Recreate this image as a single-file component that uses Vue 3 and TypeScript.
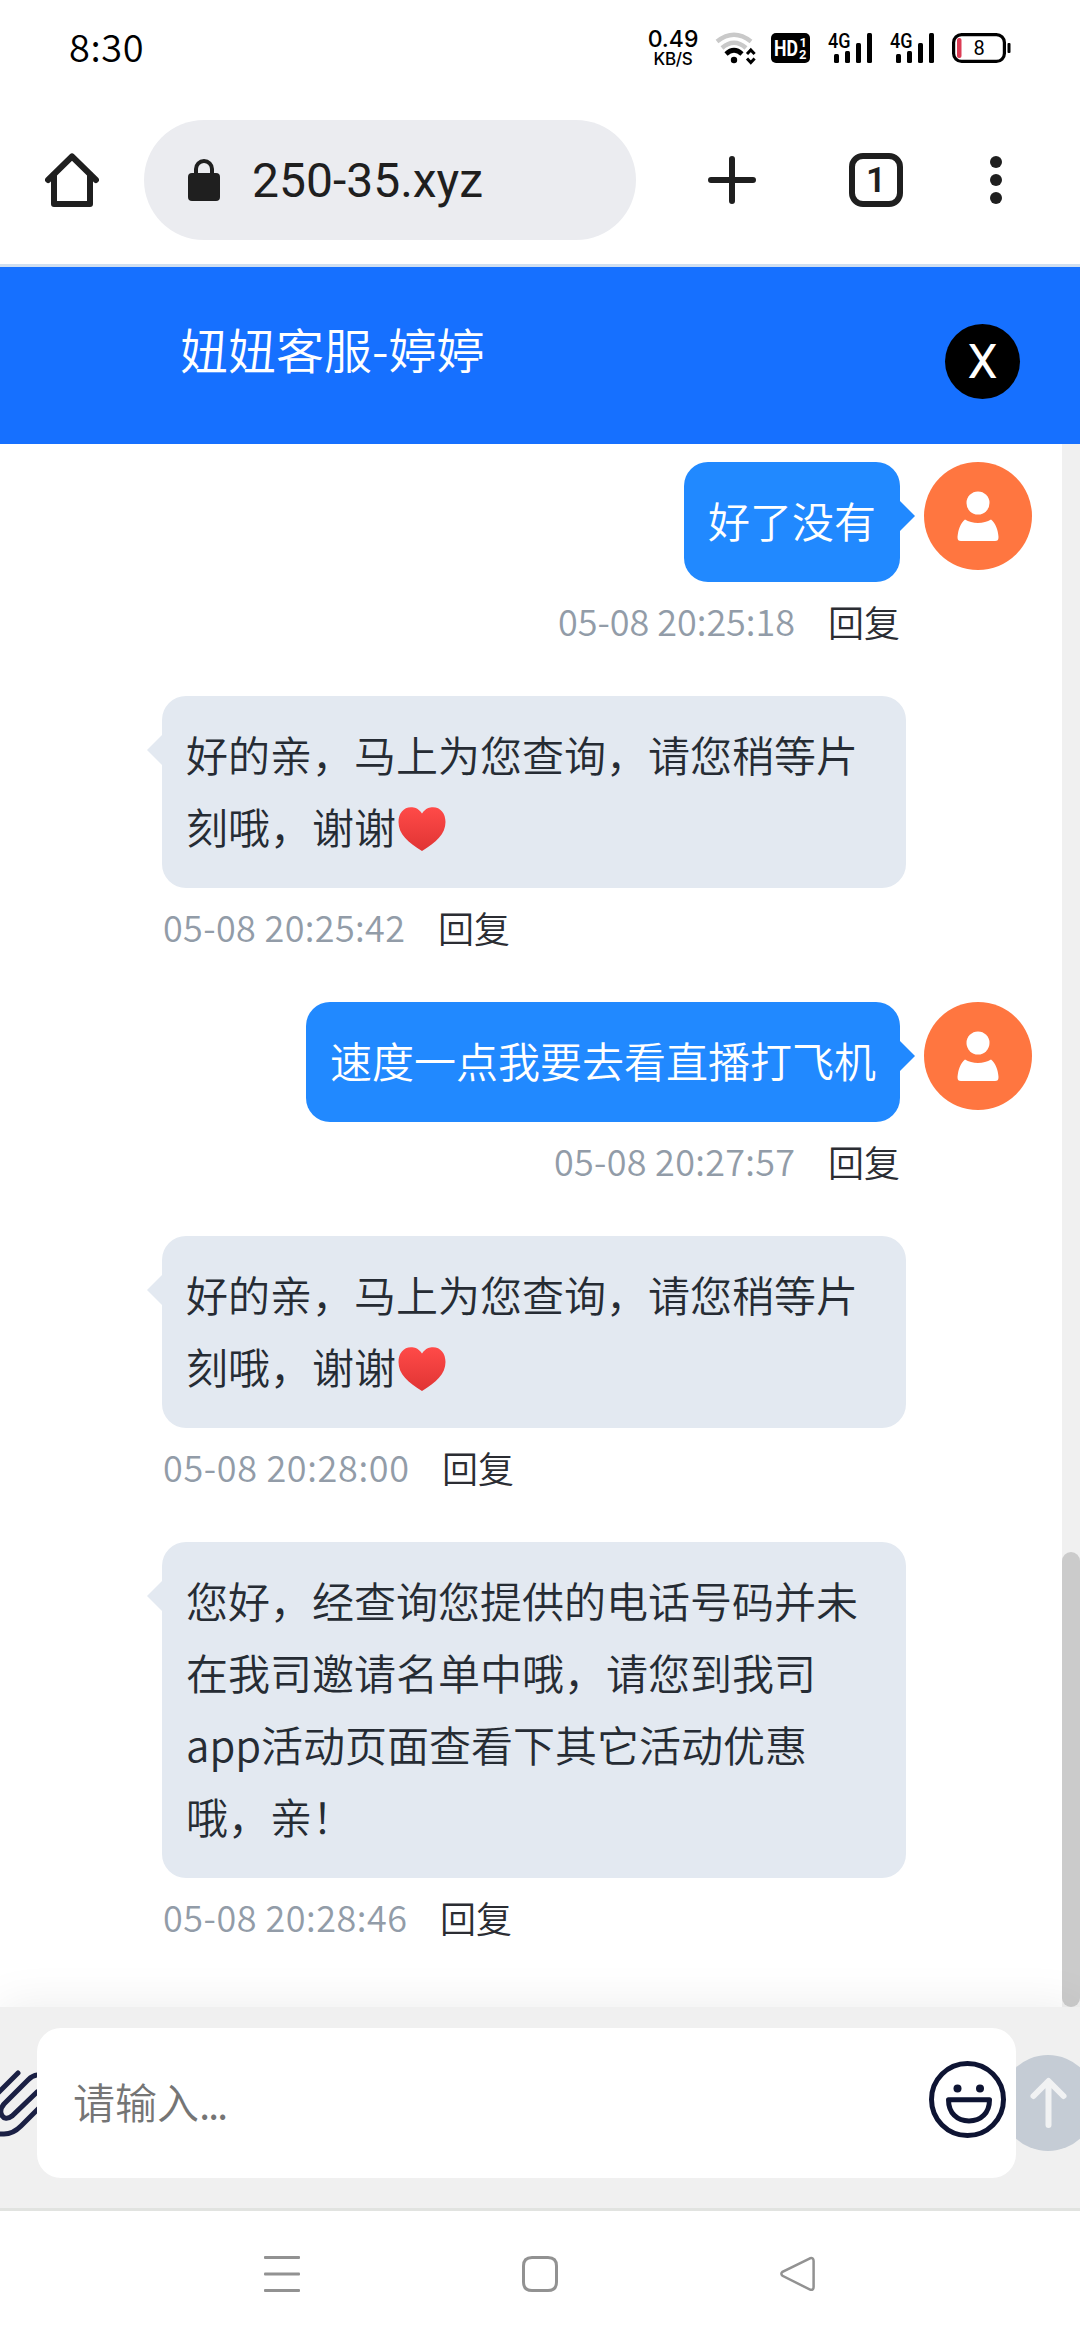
<script setup lang="ts">
interface Message {
  mine: boolean
  text: string
  heart?: boolean
  time: string
  timeWidth: number
}

const messages: Message[] = [
  { mine: true, text: '好了没有', time: '05-08 20:25:18', timeWidth: 241 },
  { mine: false, text: '好的亲，马上为您查询，请您稍等片\n刻哦，谢谢', heart: true, time: '05-08 20:25:42', timeWidth: 246 },
  { mine: true, text: '速度一点我要去看直播打飞机', time: '05-08 20:27:57', timeWidth: 245 },
  { mine: false, text: '好的亲，马上为您查询，请您稍等片\n刻哦，谢谢', heart: true, time: '05-08 20:28:00', timeWidth: 250 },
  {
    mine: false,
    text: '您好，经查询您提供的电话号码并未\n在我司邀请名单中哦，请您到我司\napp活动页面查看下其它活动优惠\n哦，亲！',
    time: '05-08 20:28:46',
    timeWidth: 248,
  },
]
</script>

<template>
  <div class="phone">
    <header class="status">
      <span class="clock">8:30</span>
      <div class="speed">
        <span class="speed-num">0.49</span>
        <span class="speed-unit">KB/S</span>
      </div>
      <svg class="wifi" width="42" height="32" viewBox="0 0 42 32" fill="none">
        <path d="M2 9.5Q19 -4 36 9.5" stroke="#c9c9c9" stroke-width="4.4" />
        <path d="M7 16Q19 5.500 31 16" stroke="#c9c9c9" stroke-width="4.4" />
        <path d="M11 22Q19 14.500 27 22" stroke="#000" stroke-width="4.6" />
        <circle cx="19" cy="28" r="3.200" fill="#000" />
        <path d="M32 22l3.800-4 3.800 4M32 26.500l3.800 4 3.800-4" stroke="#000" stroke-width="3" />
      </svg>
      <svg class="hd" width="39" height="30" viewBox="0 0 39 30">
        <rect width="39" height="30" rx="5" fill="#000" />
        <g fill="#fff" font-weight="700">
          <text x="3" y="23" font-size="22" textLength="24" lengthAdjust="spacingAndGlyphs">HD</text>
          <text x="28.500" y="14" font-size="13">1</text>
          <text x="28" y="25.500" font-size="13">2</text>
        </g>
      </svg>
      <svg v-for="n in 2" :key="n" class="signal" width="46" height="30" viewBox="0 0 46 30">
        <text x="0" y="15" font-size="20" font-weight="500" textLength="22.500" lengthAdjust="spacingAndGlyphs">4G</text>
        <rect x="6" y="21" width="5" height="9" rx="1.500" />
        <rect x="17" y="18" width="5" height="12" rx="1.500" />
        <rect x="28" y="10" width="5" height="20" rx="1.500" />
        <rect x="39" y="0" width="5" height="30" rx="1.500" />
      </svg>
      <svg class="battery" width="59" height="30" viewBox="0 0 59 30">
        <rect x="1.600" y="1.600" width="50.800" height="26.800" rx="8" fill="none" stroke="#000" stroke-width="3.200" />
        <rect x="5" y="5" width="4.500" height="20" rx="2" fill="#dc3c55" />
        <rect x="55.500" y="10" width="3" height="10" rx="1" />
        <text x="27" y="22" font-size="20" font-weight="400" text-anchor="middle">8</text>
      </svg>
    </header>

    <nav class="toolbar">
      <svg class="home" width="54" height="54" viewBox="0 0 54 54" fill="none" stroke="#1f1f1f" stroke-width="6" stroke-linejoin="round" stroke-linecap="round">
        <path d="M3 27L27 3.500L51 27" />
        <path d="M9 22V51H45V22" />
      </svg>
      <div class="address">
        <svg width="32" height="42" viewBox="0 0 32 42">
          <rect y="14" width="32" height="28" rx="4" fill="#1f1f1f" />
          <path d="M8 16V10a8 8 0 0 1 16 0V16" fill="none" stroke="#1f1f1f" stroke-width="4" />
        </svg>
        <span>250-35.xyz</span>
      </div>
      <svg class="plus" width="48" height="48" viewBox="0 0 48 48" stroke="#1f1f1f" stroke-width="6" stroke-linecap="round">
        <path d="M3 24H45M24 3V45" />
      </svg>
      <div class="tabs">1</div>
      <svg class="dots" width="12" height="48" viewBox="0 0 12 48" fill="#1f1f1f">
        <circle cx="6" cy="6" r="6" />
        <circle cx="6" cy="24" r="6" />
        <circle cx="6" cy="42" r="6" />
      </svg>
    </nav>

    <section class="title-bar">
      <h1>妞妞客服-婷婷</h1>
      <button class="close" type="button">X</button>
    </section>

    <main class="body">
      <div class="chat">
        <article v-for="m in messages" :key="m.time" class="message" :class="{ mine: m.mine }">
          <div class="column">
            <div class="bubble"><span class="copy">{{ m.text }}</span><svg v-if="m.heart" class="heart" width="48" height="44" viewBox="0 0 48 44">
                <defs>
                  <linearGradient id="heartFill" x1="0" y1="0" x2="0" y2="1">
                    <stop offset="0" stop-color="#ff4a48" />
                    <stop offset="1" stop-color="#e03434" />
                  </linearGradient>
                </defs>
                <path d="M24 6.500C20 1 16.500 .3 13 .3C5.500 .3 .5 6.500 .5 15C.5 27 10 35.500 24 44C38 35.500 47.500 27 47.500 15C47.500 6.500 42.500 .3 35 .3C31.500 .3 28 1 24 6.500Z" fill="url(#heartFill)" />
              </svg></div>
            <footer class="meta">
              <svg :width="m.timeWidth" height="54">
                <text x="1" y="36" :textLength="m.timeWidth - 4">{{ m.time }}</text>
              </svg>
              <span class="reply">回复</span>
            </footer>
          </div>
          <svg v-if="m.mine" class="avatar" width="108" height="108" viewBox="0 0 108 108">
            <circle cx="54" cy="54" r="54" fill="#ff7640" />
            <circle cx="54" cy="41" r="11.500" fill="#fff" />
            <path d="M41 57.500C48 62 60 62 67 57.500C71.500 61 74 68 74.500 75C74.500 78 73.500 79 71 79H37C34.500 79 33.500 78 33.500 75C34 68 36.500 61 41 57.500Z" fill="#fff" />
          </svg>
        </article>
      </div>
      <div class="track"><div class="thumb"></div></div>
    </main>

    <section class="composer">
      <svg class="clip" width="37" height="72" viewBox="0 0 37 72" fill="none" stroke="#1b2044" stroke-width="5" stroke-linecap="round">
        <path d="M18 6L-4 28" />
        <path d="M38 8C34 8 31 10 28 13L4 37C-3 45 3 56 12 49L37 25" />
        <path d="M-3 67H4C11 67 16 64 21 59L40 40" />
      </svg>
      <div class="field">
        <span class="placeholder">请输入<i>...</i></span>
        <svg class="smile" width="77" height="77" viewBox="0 0 77 77" fill="none" stroke="#0e1433" stroke-width="5">
          <circle cx="38.500" cy="38.500" r="36" />
          <path d="M19.500 38.800H60.500C60.500 52 52 60 40 60S19.500 52 19.500 38.800Z" stroke-linejoin="round" />
          <circle cx="28.500" cy="27.500" r="4" fill="#0e1433" stroke="none" />
          <circle cx="51" cy="27.500" r="4" fill="#0e1433" stroke="none" />
        </svg>
      </div>
      <svg class="send" width="64" height="96" viewBox="0 0 64 96">
        <circle cx="32" cy="48" r="48" fill="#c5ccd5" />
        <path d="M17.500 41L32.500 26L47.500 41M32.500 27V70" fill="none" stroke="#f1f2f3" stroke-width="6" stroke-linecap="round" stroke-linejoin="round" />
      </svg>
    </section>

    <footer class="system-nav">
      <svg width="36" height="36" viewBox="0 0 36 36" fill="#929292">
        <rect width="36" height="3" rx="1" />
        <rect y="16.500" width="36" height="3" rx="1" />
        <rect y="33" width="36" height="3" rx="1" />
      </svg>
      <svg width="36" height="36" viewBox="0 0 36 36" fill="none" stroke="#929292" stroke-width="3">
        <path d="M10 1.500H26Q34.500 1.500 34.500 10V26Q34.500 34.500 26 34.500H10Q1.500 34.500 1.500 26V10Q1.500 1.500 10 1.500Z" />
      </svg>
      <svg width="36" height="36" viewBox="0 0 36 36" fill="none" stroke="#929292" stroke-width="2.500">
        <path d="M30 2.300L2.500 15.800Q.2 17.800 2.500 19.800L30 33.600Q33.600 34.500 33.600 31V5Q33.600 1.200 30 2.300Z" />
      </svg>
    </footer>
  </div>
</template>

<style>
body {
  background: #fff;
}
</style>

<style scoped>
.phone {
  width: 1080px;
  height: 2340px;
  overflow: hidden;
  display: flex;
  flex-direction: column;
  background: #fff;
  font-family: "Noto Sans CJK SC", "Noto Sans", sans-serif;
  font-weight: 350;
}

svg {
  display: block;
  flex: none;
}

.status {
  height: 96px;
  box-sizing: border-box;
  padding: 0 69px;
  display: flex;
  align-items: center;
  font-family: Roboto, sans-serif;
}

.status svg,
.meta svg {
  overflow: visible;
}

.clock {
  width: 579px;
  margin-bottom: 5px;
  font-family: "Noto Sans CJK SC", sans-serif;
  font-size: 38px;
  line-height: 50px;
  letter-spacing: 0.6px;
  color: #000;
}

.speed {
  width: 52px;
  display: flex;
  flex-direction: column;
  align-items: center;
  font-family: Inter, sans-serif;
  font-weight: 500;
  white-space: nowrap;
}

.speed-num {
  font-size: 23px;
  line-height: 23px;
}

.speed-unit {
  font-size: 17px;
  line-height: 17px;
  letter-spacing: -0.3px;
}

.wifi {
  margin-left: 16px;
}

.hd {
  margin-left: 14px;
}

.signal {
  margin-left: 18px;
}

.signal + .signal {
  margin-left: 16px;
}

.battery {
  margin-left: 16px;
}

.toolbar {
  height: 168px;
  display: flex;
  align-items: center;
  padding-left: 45px;
  border-bottom: 3px solid #d0dff0;
  font-family: Roboto, sans-serif;
  font-weight: 400;
  color: #1f1f1f;
}

.address {
  margin-left: 45px;
  width: 492px;
  height: 120px;
  box-sizing: border-box;
  padding-left: 44px;
  border-radius: 60px;
  background: #ebecf0;
  display: flex;
  align-items: center;
  gap: 32px;
  font-size: 48px;
}

.plus {
  margin-left: 72px;
}

.tabs {
  margin-left: 93px;
  width: 54px;
  height: 54px;
  box-sizing: border-box;
  border: 6px solid #1f1f1f;
  border-radius: 14px;
  font-size: 35px;
  font-weight: 600;
  line-height: 44px;
  text-align: center;
}

.dots {
  margin-left: 87px;
}

.title-bar {
  height: 177px;
  flex: none;
  box-sizing: border-box;
  padding: 0 60px 0 180px;
  display: flex;
  align-items: center;
  justify-content: space-between;
  background: #1670ff;
  color: #fff;
}

.title-bar h1 {
  margin: 0 0 15px;
  font-size: 48px;
  font-weight: 350;
  line-height: 64px;
}

.close {
  margin: 12px 0 0;
  width: 75px;
  height: 75px;
  padding: 0;
  border: 0;
  border-radius: 50%;
  background: #000;
  color: #fff;
  font: 400 48px/75px Roboto, sans-serif;
}

.body {
  height: 1563px;
  flex: none;
  display: flex;
}

.chat {
  width: 1062px;
  box-sizing: border-box;
  padding: 18px 30px 0 162px;
}

.message {
  display: flex;
  gap: 24px;
}

.message.mine {
  justify-content: flex-end;
}

.column {
  display: flex;
  flex-direction: column;
  align-items: flex-start;
}

.mine .column {
  align-items: flex-end;
}

.bubble {
  position: relative;
  width: 744px;
  box-sizing: border-box;
  padding: 24px;
  border-radius: 24px;
  background: #e3e9f1;
  color: #262c34;
  font-size: 42px;
  line-height: 72px;
}

.copy {
  position: relative;
  top: -2px;
  white-space: pre;
}

.mine .bubble {
  width: auto;
  background: #2189ff;
  color: #fff;
}

.bubble::before {
  content: "";
  position: absolute;
  top: 39px;
  left: -15px;
  border: 15px solid transparent;
  border-left-width: 0;
  border-right-color: #e3e9f1;
}

.mine .bubble::before {
  left: auto;
  right: -15px;
  border: 15px solid transparent;
  border-right-width: 0;
  border-left-color: #2189ff;
}

.heart {
  display: inline-block;
  margin-left: 2px;
  vertical-align: -5px;
}

.meta {
  height: 114px;
  box-sizing: border-box;
  padding-top: 18px;
  display: flex;
  gap: 30px;
  font-size: 36px;
  line-height: 48px;
}

.meta text {
  fill: #929ca8;
}

.reply {
  position: relative;
  top: -3px;
  color: #2b2d33;
}

.track {
  width: 18px;
  background: #f0f0f0;
  display: flex;
  align-items: flex-end;
}

.thumb {
  width: 18px;
  height: 455px;
  border-radius: 9px;
  background: #cbcbcb;
}

.composer {
  position: relative;
  height: 204px;
  flex: none;
  box-sizing: border-box;
  padding-bottom: 9px;
  border-bottom: 3px solid #e1e3e0;
  background: #f0f0f0;
  box-shadow: 0 0 45px rgba(0, 0, 0, 0.08);
  display: flex;
  align-items: center;
}

.field {
  width: 979px;
  height: 150px;
  box-sizing: border-box;
  padding: 0 10px 0 36px;
  border-radius: 24px;
  background: #fff;
  display: flex;
  align-items: center;
  justify-content: space-between;
}

.placeholder {
  font-size: 42px;
  line-height: 60px;
  margin-bottom: 4px;
  color: #757575;
}

.placeholder i {
  font-style: normal;
  letter-spacing: -2.3px;
}

.smile {
  margin-bottom: 7px;
}

.system-nav {
  position: relative;
  flex: 1;
  display: flex;
  align-items: flex-start;
  gap: 222px;
  padding: 45px 0 0 264px;
  background: #fff;
}
</style>
